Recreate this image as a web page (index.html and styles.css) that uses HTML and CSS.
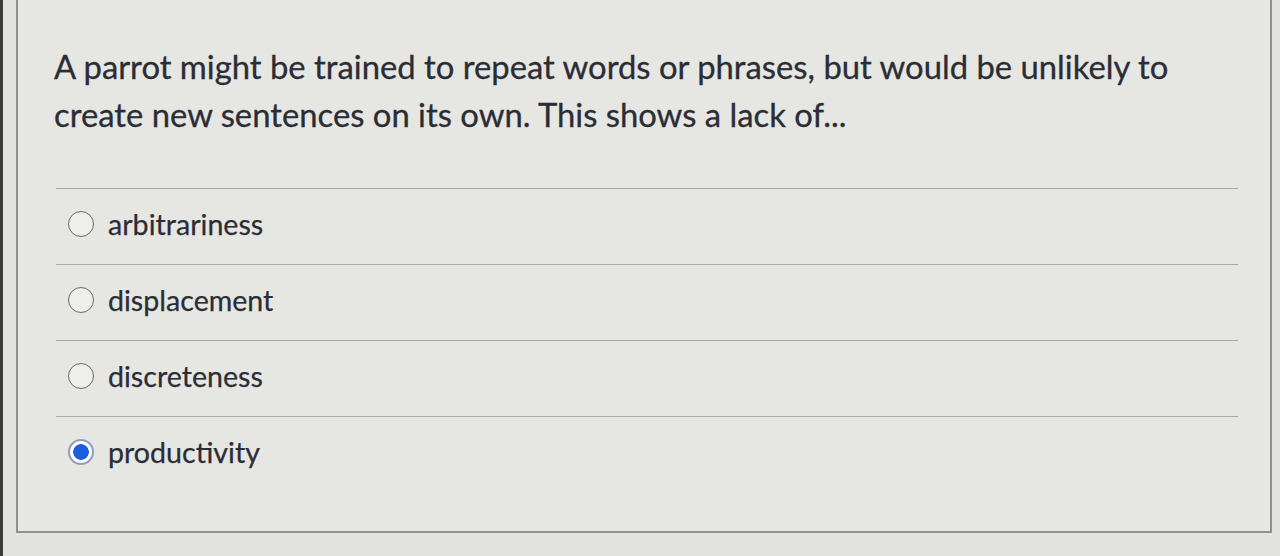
FILE: index.html
```html
<!DOCTYPE html>
<html lang="en">
<head>
<meta charset="utf-8">
<title>Quiz question</title>
<link rel="stylesheet" href="styles.css">
</head>
<body>
<div class="page">
  <div class="card">
    <div class="question">A parrot might be trained to repeat words or phrases, but would be unlikely to create new sentences on its own. This shows a lack of...</div>
    <div class="answers">
      <label class="answer"><span class="radio"></span><span class="text">arbitrariness</span></label>
      <label class="answer"><span class="radio"></span><span class="text">displacement</span></label>
      <label class="answer"><span class="radio"></span><span class="text">discreteness</span></label>
      <label class="answer"><span class="radio checked"></span><span class="text">productivity</span></label>
    </div>
  </div>
</div>
</body>
</html>
```
FILE: styles.css
```css
html, body {
  margin: 0;
  padding: 0;
  height: 100%;
}
body {
  background: #e2e2df;
  font-family: Lato, "Open Sans", sans-serif;
  color: #2b2d35;
  overflow: hidden;
}
.page {
  height: 556px;
  border-left: 3px solid #3a3a3a;
  padding-left: 13px;
  box-sizing: border-box;
}
.card {
  width: 1256px;
  height: 533px;
  box-sizing: border-box;
  background: #e6e6e3;
  border: 2px solid #8f8f8d;
  border-top: none;
  padding: 43px 32px 0 36px;
}
.question {
  font-size: 32.8px;
  line-height: 48px;
  width: 1150px;
  -webkit-text-stroke: 0.3px #2b2d35;
}
.answers {
  margin-top: 49px;
  margin-left: 2px;
}
.answer {
  display: flex;
  align-items: center;
  height: 76px;
  border-top: 1px solid #a9a9a7;
  padding-bottom: 5px;
  box-sizing: border-box;
}
.radio {
  width: 26px;
  height: 26px;
  border-radius: 50%;
  border: 1.5px solid #6a6a6a;
  background: #eeeeec;
  box-sizing: border-box;
  margin-left: 12px;
  margin-right: 14px;
  flex: none;
}
.radio.checked {
  border: 2px solid #8e9cc4;
  background: radial-gradient(circle, #1b5fe0 0 7.5px, #ffffff 8.1px);
}
.text {
  font-size: 28.6px;
  line-height: 34px;
  -webkit-text-stroke: 0.25px #2b2d35;
}
```
